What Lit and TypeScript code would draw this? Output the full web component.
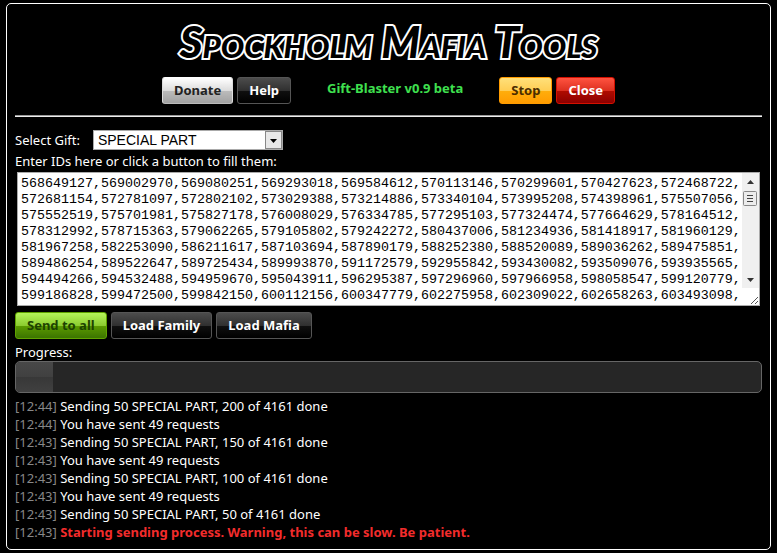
import { LitElement, html, css } from "lit";
import { customElement, property, state } from "lit/decorators.js";
import { classMap } from "lit/directives/class-map.js";

interface LogEntry {
  time: string;
  text: string;
  warning?: boolean;
}

const IDS = [
  "568649127,569002970,569080251,569293018,569584612,570113146,570299601,570427623,572468722,",
  "572681154,572781097,572802102,573029388,573214886,573340104,573995208,574398961,575507056,",
  "575552519,575701981,575827178,576008029,576334785,577295103,577324474,577664629,578164512,",
  "578312992,578715363,579062265,579105802,579242272,580437006,581234936,581418917,581960129,",
  "581967258,582253090,586211617,587103694,587890179,588252380,588520089,589036262,589475851,",
  "589486254,589522647,589725434,589993870,591172579,592955842,593430082,593509076,593935565,",
  "594494266,594532488,594959670,595043911,596295387,597296960,597966958,598058547,599120779,",
  "599186828,599472500,599842150,600112156,600347779,602275958,602309022,602658263,603493098,",
].join("\n");

const LOG: LogEntry[] = [
  { time: "12:44", text: "Sending 50 SPECIAL PART, 200 of 4161 done" },
  { time: "12:44", text: "You have sent 49 requests" },
  { time: "12:43", text: "Sending 50 SPECIAL PART, 150 of 4161 done" },
  { time: "12:43", text: "You have sent 49 requests" },
  { time: "12:43", text: "Sending 50 SPECIAL PART, 100 of 4161 done" },
  { time: "12:43", text: "You have sent 49 requests" },
  { time: "12:43", text: "Sending 50 SPECIAL PART, 50 of 4161 done" },
  { time: "12:43", text: "Starting sending process. Warning, this can be slow. Be patient.", warning: true },
];

@customElement("glossy-button")
export class GlossyButton extends LitElement {
  @property() tone = "black";

  static styles = css`
    :host {
      display: block;
    }
    .button {
      display: block;
      box-sizing: border-box;
      height: 27px;
      margin: 0;
      padding: 0 11px;
      border: 1px solid #555;
      border-radius: 3px;
      font: bold 13px/25px "Trebuchet MS", "Noto Sans", sans-serif;
      white-space: nowrap;
      cursor: pointer;
    }
    .black {
      color: #fff;
      background: linear-gradient(#4c4c4c, #303030 50%, #101010 51%, #000);
    }
    .white {
      color: #222;
      border-color: #fff #ddd #bbb;
      background: linear-gradient(#fff, #dcdcdc 50%, #bcbcbc 51%, #a2a2a2);
    }
    .orange {
      color: #4a2c00;
      border-color: #ff9c00;
      background: linear-gradient(#ffe07a, #ffce55 50%, #ffae0c 51%, #ff9c00);
    }
    .red {
      color: #fff;
      border-color: #d41000;
      background: linear-gradient(#ff5340, #dd3020 50%, #b00c00 51%, #8c0000);
    }
    .green {
      color: #1d4200;
      border-color: #5fa300;
      background: linear-gradient(#b5f45a, #8ccc30 50%, #5c9c00 51%, #3c7400);
    }
  `;

  render() {
    return html`<button type="button" class=${classMap({ button: true, [this.tone]: true })}><slot></slot></button>`;
  }
}

@customElement("app-root")
export class AppRoot extends LitElement {
  @state() private progress = 5;

  static styles = css`
    :host {
      display: block;
      box-sizing: border-box;
      min-height: 100vh;
      padding: 3px 6px;
      background: #000;
      color: #fff;
      font: 13px/18px "Trebuchet MS", "Noto Sans", sans-serif;
    }
    .panel {
      padding: 8px;
      border: 1px solid #fff;
      border-radius: 5px;
    }
    .title {
      margin: 0;
      padding-top: 5px;
      font: italic 900 44px/48px Lato, sans-serif;
      font-variant-caps: small-caps;
      text-align: center;
      color: #000;
      -webkit-text-stroke: 4px #fff;
      paint-order: stroke fill;
    }
    .toolbar {
      display: flex;
      justify-content: center;
      gap: 36px;
      margin-top: 12px;
    }
    .group {
      display: flex;
      gap: 4px;
    }
    .version {
      line-height: 22px;
      font-weight: bold;
      color: #3fe04f;
    }
    .rule {
      height: 1px;
      margin: 11px 0 13px;
      border: 0;
      border-top: 1px solid #999;
      background: #eee;
    }
    .gift {
      display: flex;
      align-items: center;
      gap: 13px;
    }
    .picker {
      position: relative;
      width: 190px;
    }
    .select {
      display: block;
      box-sizing: border-box;
      width: 100%;
      height: 20px;
      padding: 0 20px 0 4px;
      border: 1px solid #aaa;
      border-radius: 0;
      appearance: none;
      background: #fff;
      color: #000;
      font: 14px/18px "Liberation Sans", Arial, sans-serif;
    }
    .arrow {
      position: absolute;
      top: 1px;
      right: 1px;
      width: 17px;
      height: 18px;
      pointer-events: none;
    }
    .caption {
      display: block;
      margin: 2px 0;
    }
    .ids {
      display: flex;
      box-sizing: border-box;
      height: 134px;
      margin: 0 2px;
      border: 1px solid #aaa;
      background: #fff;
    }
    .field {
      flex: 1;
      min-width: 0;
      box-sizing: border-box;
      padding: 3px 3px 1px;
      border: 0;
      outline: 0;
      resize: none;
      overflow: hidden;
      background: #fff;
      color: #000;
      font-family: "Liberation Mono", "Courier New", monospace;
      line-height: 16px;
      white-space: pre;
    }
    .scroll {
      flex: none;
      width: 17px;
      height: 132px;
    }
    .actions {
      display: flex;
      gap: 4px;
      margin-top: 6px;
    }
    .progress-label {
      margin-top: 4px;
    }
    .track {
      box-sizing: border-box;
      height: 32px;
      border: 1px solid #666;
      border-radius: 5px;
      background: #262626;
      overflow: hidden;
    }
    .fill {
      height: 100%;
      background: linear-gradient(#484848, #404040 50%, #383838 51%, #404040);
    }
    .log {
      margin: 4px 0 0;
      padding: 0;
      list-style: none;
    }
    .time {
      color: #888;
    }
    .warning {
      font-weight: bold;
      color: #f22c2c;
    }
  `;

  private scrollbar() {
    return html`
      <svg class="scroll" viewBox="0 0 17 132" aria-hidden="true">
        <rect width="17" height="115" fill="#f0f0f0" />
        <path d="M5 11h7L8.500 7z" fill="#333" />
        <rect x="1.500" y="18.500" width="13" height="14" rx="1" fill="#ececec" stroke="#888" />
        <path d="M5 22.500h6M5 25.500h6M5 28.500h6" stroke="#444" />
        <path d="M5 105h7l-3.500 4z" fill="#333" />
        <path d="M9 131l7-7M13 131l3-3" stroke="#555" fill="none" />
      </svg>
    `;
  }

  render() {
    return html`
      <main class="panel">
        <h1 class="title">Spockholm Mafia Tools</h1>
        <div class="toolbar">
          <div class="group">
            <glossy-button tone="white">Donate</glossy-button>
            <glossy-button>Help</glossy-button>
          </div>
          <div class="version">Gift-Blaster v0.9 beta</div>
          <div class="group">
            <glossy-button tone="orange">Stop</glossy-button>
            <glossy-button tone="red">Close</glossy-button>
          </div>
        </div>
        <hr class="rule" />
        <div class="gift">
          <label for="gift">Select Gift:</label>
          <div class="picker">
            <select id="gift" class="select">
              <option>SPECIAL PART</option>
            </select>
            <svg class="arrow" viewBox="0 0 17 18" aria-hidden="true">
              <rect x=".5" y=".5" width="16" height="17" fill="#e8e8e8" stroke="#888" />
              <path d="M5 8h7l-3.500 4z" fill="#000" />
            </svg>
          </div>
        </div>
        <label class="caption" for="ids">Enter IDs here or click a button to fill them:</label>
        <div class="ids">
          <textarea id="ids" class="field" spellcheck="false" .value=${IDS}></textarea>
          ${this.scrollbar()}
        </div>
        <div class="actions">
          <glossy-button tone="green">Send to all</glossy-button>
          <glossy-button>Load Family</glossy-button>
          <glossy-button>Load Mafia</glossy-button>
        </div>
        <div class="progress-label" id="progress-label">Progress:</div>
        <div
          class="track"
          role="progressbar"
          aria-labelledby="progress-label"
          aria-valuenow=${this.progress}
        >
          <div class="fill" style="width: ${this.progress}%"></div>
        </div>
        <ul class="log">
          ${LOG.map(
            (entry) => html`<li>
              <span class="time">[${entry.time}]</span>
              <span class=${classMap({ warning: !!entry.warning })}>${entry.text}</span>
            </li>`
          )}
        </ul>
      </main>
    `;
  }
}
